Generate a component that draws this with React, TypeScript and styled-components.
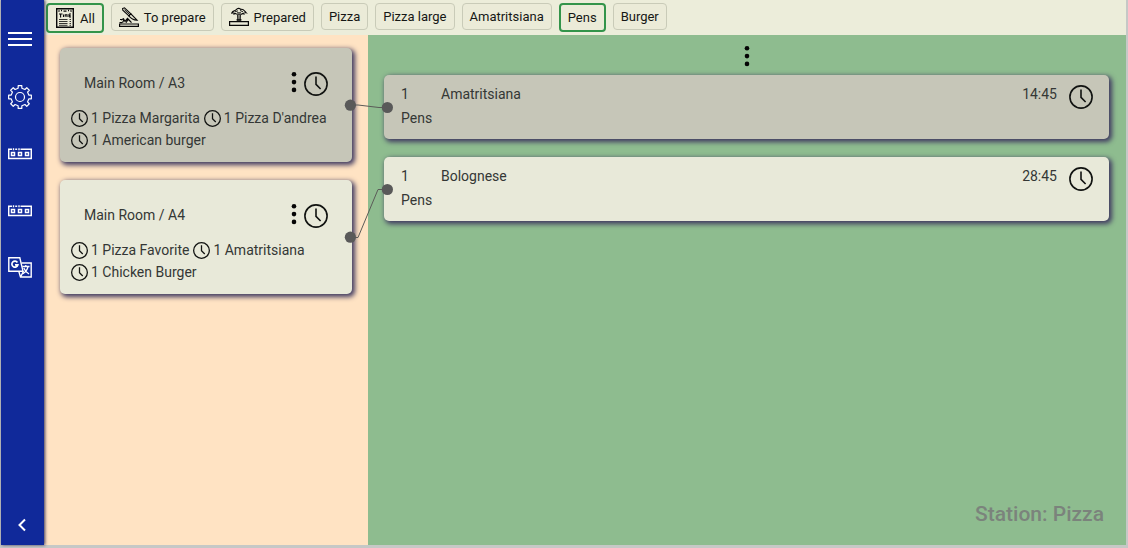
import React from "react";
import styled, { createGlobalStyle } from "styled-components";

const GlobalStyle = createGlobalStyle`
  *, *::before, *::after { box-sizing: border-box; }
  body {
    margin: 0;
    font-family: Roboto, "Liberation Sans", sans-serif;
    font-size: 14px;
    line-height: 22px;
    color: #343735;
    background: #c8cbc8;
  }
  h1, h2, p, ul { margin: 0; padding: 0; font: inherit; }
  ul { list-style: none; }
  button { font: inherit; color: inherit; margin: 0; cursor: pointer; }
  svg { display: block; flex: none; }
`;

const Shell = styled.div`
  display: flex;
  min-height: 100vh;
  padding: 0 2px 3px 1px;
  background: #c6c8c6;
`;

const Sidebar = styled.nav`
  z-index: 1;
  flex: none;
  display: flex;
  flex-direction: column;
  gap: 33px;
  width: 43px;
  padding: 28px 0 8px 7px;
  color: #fff;
  background: #10299a;
  box-shadow: 1px 0 3px #3b3558;
`;

const SideButton = styled.button<{ $bottom?: boolean }>`
  display: block;
  width: 24px;
  height: 24px;
  padding: 0;
  border: 0;
  color: #fff;
  background: none;
  margin-top: ${(p) => (p.$bottom ? "auto" : "0")};
`;

const Content = styled.div`
  flex: 1;
  min-width: 0;
  display: flex;
  flex-direction: column;
`;

const Toolbar = styled.header`
  display: flex;
  align-items: flex-start;
  gap: 7px;
  min-height: 35px;
  padding: 3px 2px 2px;
  background: #ecedda;
`;

const FilterButton = styled.button<{ $active?: boolean }>`
  && {
    font-size: 13px;
    line-height: 19px;
  }
  display: flex;
  align-items: center;
  gap: 5px;
  padding: 3px 7px;
  border: ${(p) => (p.$active ? "2px solid #33944a" : "1px solid #c9cbb8")};
  border-radius: 4px;
  white-space: nowrap;
  color: #151715;
  background: #ebebd8;
`;

const Board = styled.main`
  position: relative;
  flex: 1;
  display: flex;
`;

const Orders = styled.section`
  flex: none;
  display: flex;
  flex-direction: column;
  gap: 18px;
  width: 324px;
  padding: 13px 16px;
  background: #ffe3c3;
`;

const Station = styled.section`
  flex: 1;
  min-width: 0;
  display: flex;
  flex-direction: column;
  padding: 10px 17px 17px 16px;
  background: #8ebc8f;
`;

const Card = styled.article<{ $muted?: boolean }>`
  position: relative;
  border-radius: 5px;
  background: ${(p) => (p.$muted ? "#c6c6b8" : "#e8e9d9")};
  box-shadow: 2px 2px 5px 1px #403a60;
`;

const OrderCard = styled(Card)`
  min-height: 114px;
  padding: 24px 10px 11px 11px;
`;

const OrderHeader = styled.header`
  display: flex;
  align-items: center;
  padding: 0 14px 0 13px;
  height: 24px;
`;

const OrderTitle = styled.h2`
  flex: 1;
  padding-bottom: 2px;
`;

const IconButton = styled.button`
  display: block;
  padding: 0;
  border: 0;
  color: #080908;
  background: none;
`;

const OrderItems = styled.ul`
  display: flex;
  flex-wrap: wrap;
  column-gap: 4px;
  margin-top: 11px;
`;

const OrderItem = styled.li`
  display: flex;
  align-items: center;
  gap: 3px;
  white-space: nowrap;
`;

const StationMenu = styled.div`
  display: flex;
  justify-content: center;
  align-items: flex-start;
  height: 30px;
`;

const Dishes = styled.div`
  display: flex;
  flex-direction: column;
  gap: 18px;
`;

const DishCard = styled(Card)`
  display: grid;
  grid-template-columns: 40px 1fr auto 24px;
  grid-template-rows: 24px 24px;
  align-items: center;
  padding: 7px 16px 9px 17px;
`;

const DishCategory = styled.p`
  grid-column: 1 / 3;
`;

const DishTime = styled.time`
  padding-right: 12px;
`;

const ClockSlot = styled.div`
  padding-top: 6px;
`;

const StationName = styled.h1`
  margin-top: auto;
  padding-right: 5px;
  font-size: 21px;
  font-weight: 500;
  line-height: 28px;
  text-align: right;
  color: #7b837c;
`;

/* Lines between an order and the dish it contains, drawn over both panels. */
const Links = styled.svg`
  position: absolute;
  left: 300px;
  top: 60px;
  pointer-events: none;
`;

const Clock = ({ size = 24 }: { size?: number }) => (
  <svg width={size} height={size} viewBox="0 0 24 24" fill="none" stroke="#111311" strokeWidth={size < 20 ? 1.8 : 1.6} aria-hidden="true">
    <circle cx="12" cy="12" r="11.1" />
    <path d="M12 4.5V12.4L16.6 17" />
  </svg>
);

const Dots = () => (
  <svg width="20" height="26" viewBox="0 0 20 26" fill="#050505" aria-hidden="true">
    <circle cx="10" cy="3.3" r="2.3" />
    <circle cx="10" cy="11.1" r="2.3" />
    <circle cx="10" cy="18.9" r="2.3" />
  </svg>
);

const MenuIcon = () => (
  <svg width="24" height="24" viewBox="0 0 24 24" stroke="#fff" strokeWidth="2" aria-hidden="true">
    <path d="M0 5H24M0 11H24M0 17H24" />
  </svg>
);

const gearPath = (() => {
  const points: string[] = [];
  const at = (r: number, deg: number) => {
    const a = (deg * Math.PI) / 180;
    return `${(12 + r * Math.cos(a)).toFixed(2)} ${(12 + r * Math.sin(a)).toFixed(2)}`;
  };
  for (let i = 0; i < 8; i++) {
    const d = i * 45;
    points.push(at(9, d - 12), at(11.5, d - 9), at(11.5, d + 9), at(9, d + 12));
  }
  return `M${points.join("L")}Z`;
})();

const GearIcon = () => (
  <svg width="24" height="24" viewBox="0 0 24 24" fill="none" stroke="#fff" strokeWidth="1.2" strokeLinejoin="round" aria-hidden="true">
    <path d={gearPath} />
    <circle cx="12" cy="12" r="4.5" />
  </svg>
);

const CounterIcon = () => (
  <svg width="24" height="24" viewBox="0 0 24 24" fill="none" stroke="#fff" aria-hidden="true">
    <path d="M4 7.2H.7V16.4H23.3V7.2H12.5" strokeWidth="1.5" />
    <path d="M5.5 6.3V8.2M7.2 7.2H9.2M11 6.3V8.2" strokeWidth="1.4" />
    <path d="M3.5 10.5h3v3h-3zM10.5 10.5h3v3h-3zM17.5 10.5h3v3h-3z" strokeWidth="1.5" />
  </svg>
);

const TranslateIcon = () => (
  <svg width="24" height="24" viewBox="0 0 24 24" fill="none" stroke="#fff" strokeWidth="1.4" aria-hidden="true">
    <path d="M.8 1.8H11.8L15 15.2H.8Z" />
    <path d="M13.5 7H23.2V21H12.5L10.8 15.4M12.5 21L15.5 15.4" />
    <path d="M9.4 6.4A3 3 0 1 0 9.8 8.9H7" strokeWidth="1.7" />
    <path d="M14.3 10.5H21.5M17.8 9V10.5M20 10.7C19.5 13.5 17.5 16 15 17.8M15.8 12C16.8 14.6 18.6 16.6 21 18" strokeWidth="1.3" />
  </svg>
);

const BackIcon = () => (
  <svg width="24" height="24" viewBox="0 0 24 24" fill="none" stroke="#fff" strokeWidth="2" aria-hidden="true">
    <path d="M17 6.5L11.5 12L17 17.5" />
  </svg>
);

const ListIcon = () => (
  <svg width="20" height="20" viewBox="0 0 20 20" fill="none" stroke="#080808" aria-hidden="true">
    <path d="M1.7 .7H18.3V19.3H1.7Z" strokeWidth="1.4" />
    <path d="M3.5 3.5L4.5 2.5M6 2.5H7M8.5 3.2H11.5M13 2.5H14M15.5 2.5L16.5 3.5" strokeWidth="1.3" />
    <path d="M4 6H7.5M5.6 6V9.5M8.5 9V6.5M10.2 8.8V6.8H12V9M14 6H16M14 7.6H15.6M14 9H16M14 6V9" strokeWidth="1.1" />
    <path d="M4 11.5H12.5M14.5 11.5H16M4 13.5H12.5M14.5 13.5H16M4 15.5H12.5M14.5 15.5H16M4 17.3H12.5M14.5 17.3H16" strokeWidth=".8" />
  </svg>
);

const CuttingIcon = () => (
  <svg width="20" height="20" viewBox="0 0 20 20" fill="none" stroke="#080808" aria-hidden="true">
    <path d="M3.6 1.6L5.5 .8L11.8 6.8L9.8 8.8L3.8 3.2Z" strokeWidth="1.1" />
    <path d="M9.8 8.8L11.8 6.8L18 13.2C15.5 13 12 11.5 9.8 8.8Z" strokeWidth="1.1" />
    <path d="M5.5 2.8L10.3 7.4" strokeWidth="1" />
    <path d="M.6 17H19.4V19.3H.6Z" strokeWidth="1.2" />
    <path d="M.5 15.7H3M2 13L4.5 11.8L6 14.5L8.5 11.5L10.5 13.5L12.5 15.7M3.5 15.8L5 12.5M7 15.8L9 12.5M1 12.5H3" strokeWidth="1.2" />
  </svg>
);

const ServedIcon = () => (
  <svg width="20" height="20" viewBox="0 0 20 20" fill="none" stroke="#080808" aria-hidden="true">
    <path d="M.6 14.6H19.4V18.4H.6Z" strokeWidth="1.2" />
    <path d="M8.8 8L9 14.5M11.2 8L11 14.5M7.5 12.8H12.5" strokeWidth="1.3" />
    <path d="M2.8 6C3.5 3.5 6 4.3 7 2.8C9 .5 11 1.5 12 2.5C14 1.5 15 3.5 17.2 5.8C14 5 13.5 8.5 10 7C7 8.5 5.5 5 2.8 6Z" strokeWidth="1.1" />
    <path d="M6 4.8L9 3.8M11 3.5L14 4.8M8 5.8H12M4.5 7.5L6.5 6.5M13.5 6.5L15.5 7.5" strokeWidth=".9" />
  </svg>
);

const filters: { label: string; icon?: React.ReactNode; active?: boolean }[] = [
  { label: "All", icon: <ListIcon />, active: true },
  { label: "To prepare", icon: <CuttingIcon /> },
  { label: "Prepared", icon: <ServedIcon /> },
  { label: "Pizza" },
  { label: "Pizza large" },
  { label: "Amatritsiana" },
  { label: "Pens", active: true },
  { label: "Burger" },
];

const orders = [
  { title: "Main Room / A3", muted: true, items: ["1 Pizza Margarita", "1 Pizza D'andrea", "1 American burger"] },
  { title: "Main Room / A4", muted: false, items: ["1 Pizza Favorite", "1 Amatritsiana", "1 Chicken Burger"] },
];

const dishes = [
  { count: 1, name: "Amatritsiana", category: "Pens", time: "14:45", muted: true },
  { count: 1, name: "Bolognese", category: "Pens", time: "28:45", muted: false },
];

export default function App() {
  return (
    <>
      <GlobalStyle />
      <Shell>
        <Sidebar>
          <SideButton aria-label="Menu"><MenuIcon /></SideButton>
          <SideButton aria-label="Settings"><GearIcon /></SideButton>
          <SideButton aria-label="Station 1"><CounterIcon /></SideButton>
          <SideButton aria-label="Station 2"><CounterIcon /></SideButton>
          <SideButton aria-label="Language"><TranslateIcon /></SideButton>
          <SideButton $bottom aria-label="Back"><BackIcon /></SideButton>
        </Sidebar>
        <Content>
          <Toolbar>
            {filters.map((f) => (
              <FilterButton key={f.label} $active={f.active} aria-pressed={!!f.active}>
                {f.icon}
                {f.label}
              </FilterButton>
            ))}
          </Toolbar>
          <Board>
            <Orders>
              {orders.map((o) => (
                <OrderCard key={o.title} $muted={o.muted}>
                  <OrderHeader>
                    <OrderTitle>{o.title}</OrderTitle>
                    <IconButton aria-label="Order options"><Dots /></IconButton>
                    <Clock />
                  </OrderHeader>
                  <OrderItems>
                    {o.items.map((item) => (
                      <OrderItem key={item}>
                        <Clock size={17} />
                        {item}
                      </OrderItem>
                    ))}
                  </OrderItems>
                </OrderCard>
              ))}
            </Orders>
            <Station>
              <StationMenu>
                <IconButton aria-label="Station options"><Dots /></IconButton>
              </StationMenu>
              <Dishes>
                {dishes.map((d) => (
                  <DishCard key={d.name} $muted={d.muted}>
                    <span>{d.count}</span>
                    <span>{d.name}</span>
                    <DishTime>{d.time}</DishTime>
                    <ClockSlot><Clock /></ClockSlot>
                    <DishCategory>{d.category}</DishCategory>
                  </DishCard>
                ))}
              </Dishes>
              <StationName>Station: Pizza</StationName>
            </Station>
            <Links width="50" height="160" viewBox="0 0 50 160" fill="none" stroke="#5b5b58" aria-hidden="true">
              <path d="M6.5 10L14 10L35 12.5H43" />
              <path d="M6.5 142.5H14L34 94.5H43" />
              <g fill="#595959" stroke="none">
                <circle cx="6.4" cy="10.2" r="5.6" />
                <circle cx="43.4" cy="12.5" r="5.6" />
                <circle cx="6.4" cy="142.2" r="5.6" />
                <circle cx="43.4" cy="94.5" r="5.6" />
              </g>
            </Links>
          </Board>
        </Content>
      </Shell>
    </>
  );
}
